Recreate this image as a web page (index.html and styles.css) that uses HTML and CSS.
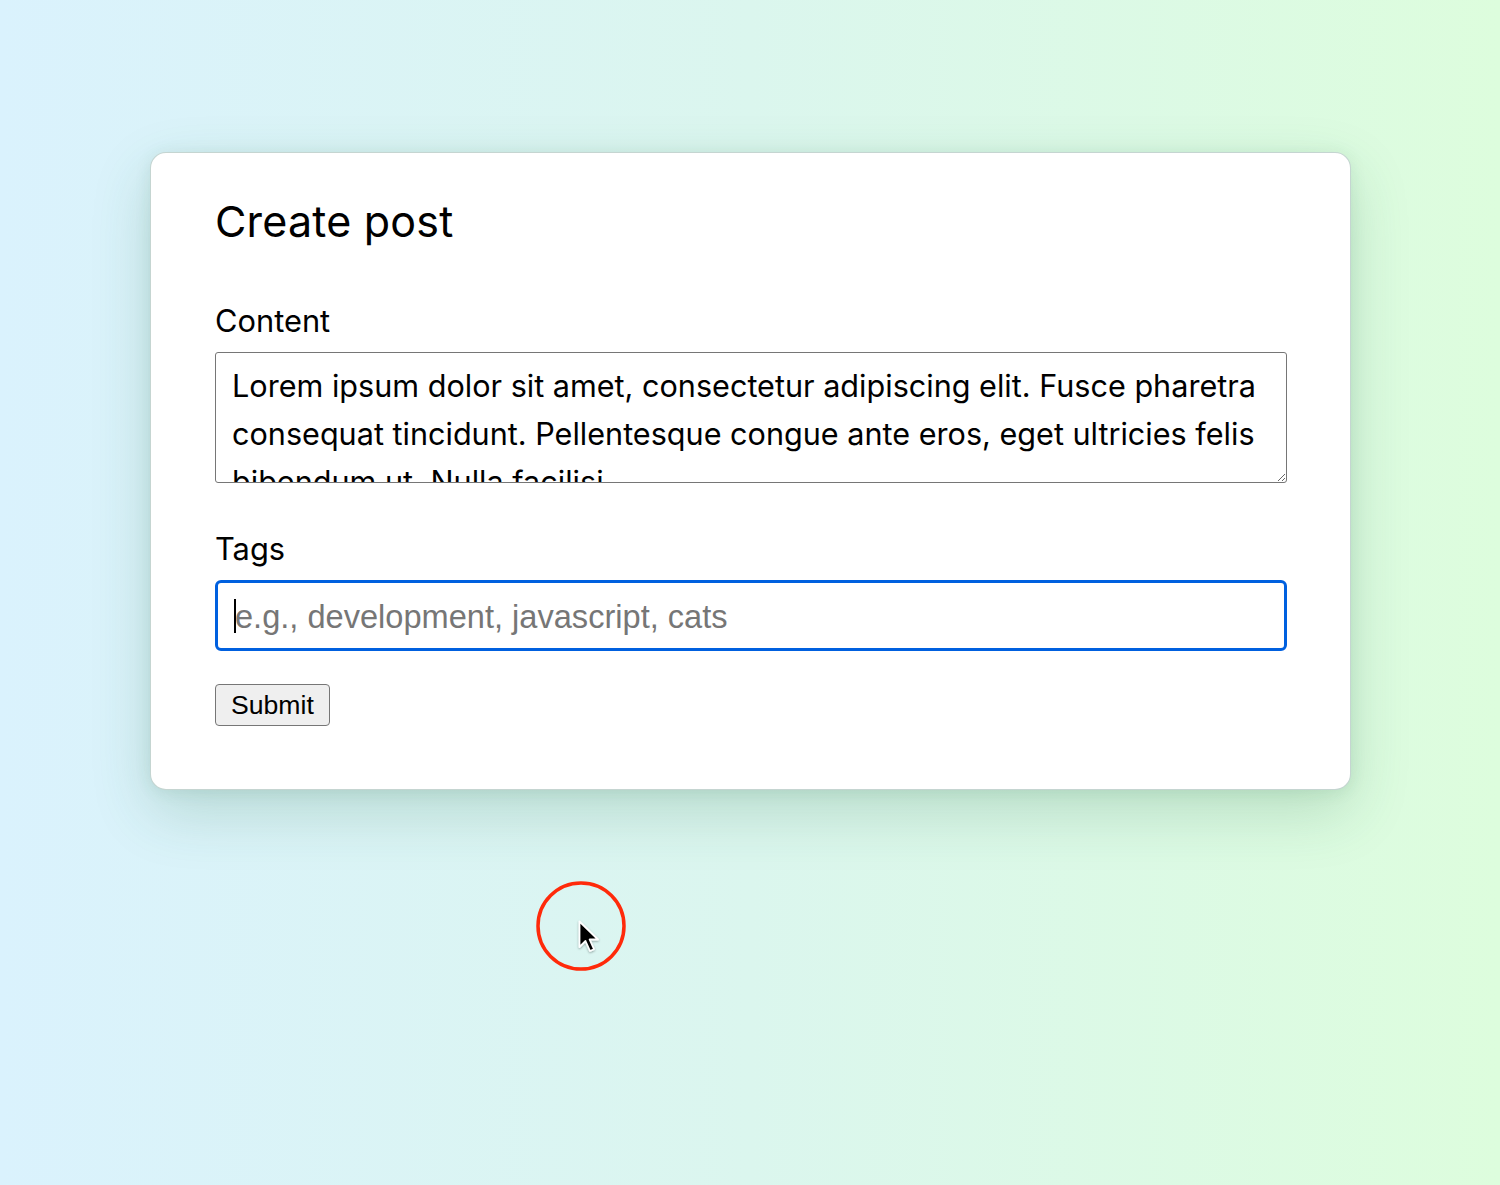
FILE: index.html
```html
<!DOCTYPE html>
<html lang="en">
<head>
<meta charset="utf-8">
<title>Create post</title>
<link rel="stylesheet" href="styles.css">
</head>
<body>
<main class="card">
  <h1 class="title">Create post</h1>
  <form class="form">
    <label class="label" for="content">Content</label>
    <textarea id="content" class="textarea">Lorem ipsum dolor sit amet, consectetur adipiscing elit. Fusce pharetra consequat tincidunt. Pellentesque congue ante eros, eget ultricies felis bibendum ut. Nulla facilisi.</textarea>
    <label class="label label-tags" for="tags">Tags</label>
    <div class="input-wrap">
      <input id="tags" class="input" type="text" placeholder="e.g., development, javascript, cats">
      <span class="caret"></span>
    </div>
    <div class="actions">
      <button type="button" class="button">Submit</button>
    </div>
  </form>
</main>
<svg class="pointer" width="96" height="96" viewBox="0 0 96 96" aria-hidden="true">
  <defs>
    <filter id="sh" x="-50%" y="-50%" width="200%" height="200%">
      <feDropShadow dx="0" dy="1" stdDeviation="1" flood-color="#000" flood-opacity="0.35"/>
    </filter>
  </defs>
  <circle cx="46" cy="46" r="43" fill="none" stroke="#ff2a0a" stroke-width="3.5"/>
  <path filter="url(#sh)" d="M44.5 41.5 L44.5 67 L50.5 61 L55 71 L59 69.2 L54.6 59.5 L63 59.5 Z" fill="#000" stroke="#fff" stroke-width="1.8" stroke-linejoin="round"/>
</svg>
</body>
</html>
```
FILE: styles.css
```css
html, body {
  margin: 0;
  padding: 0;
}
body {
  width: 1500px;
  height: 1185px;
  overflow: hidden;
  position: relative;
  background: linear-gradient(90deg, #daf2fd 0%, #dbf6ee 50%, #ddfddd 100%);
  font-family: Inter, "Liberation Sans", sans-serif;
  color: #000;
}
.card {
  box-sizing: border-box;
  width: 1201px;
  margin: 152px 0 0 150px;
  padding: 42px 63px 63px 64px;
  background: #fff;
  border: 1px solid rgba(110, 150, 140, 0.4);
  border-radius: 16px;
  box-shadow: 0 22px 60px rgba(40, 110, 70, 0.2), 0 2px 16px rgba(40, 110, 70, 0.1);
}
.title {
  margin: 0;
  font-size: 43px;
  line-height: 52px;
  font-weight: 400;
  letter-spacing: 0.2px;
}
.form {
  display: flex;
  flex-direction: column;
  margin-top: 56px;
}
.label {
  font-size: 30.8px;
  line-height: 36px;
  margin-bottom: 13px;
}
.label-tags {
  margin-top: 48px;
}
.textarea {
  box-sizing: border-box;
  display: block;
  width: 1072px;
  height: 131px;
  margin: 0;
  padding: 9px 16px;
  border: 1px solid #767676;
  border-radius: 3px;
  font-family: Inter, "Liberation Sans", sans-serif;
  font-size: 30.6px;
  line-height: 48px;
  color: #000;
  overflow: hidden;
}
.input-wrap {
  position: relative;
  width: 1072px;
}
.input {
  box-sizing: border-box;
  display: block;
  width: 1072px;
  height: 71px;
  margin: 0;
  padding: 2px 17px 0;
  border: 3px solid #0060df;
  border-radius: 6px;
  outline: none;
  font-family: "Liberation Sans", Arial, sans-serif;
  font-size: 32.6px;
  color: #000;
  background: #fff;
}
.input::placeholder {
  color: #767676;
}
.caret {
  position: absolute;
  left: 19px;
  top: 19px;
  width: 2px;
  height: 34px;
  background: #000;
}
.actions {
  margin-top: 33px;
  display: flex;
}
.button {
  box-sizing: border-box;
  height: 42px;
  padding: 0 15px;
  border: 1px solid #767676;
  border-radius: 4px;
  background: #efefef;
  font-family: "Liberation Sans", Arial, sans-serif;
  font-size: 26.6px;
  color: #000;
}
.pointer {
  position: absolute;
  left: 535px;
  top: 880px;
}
```
